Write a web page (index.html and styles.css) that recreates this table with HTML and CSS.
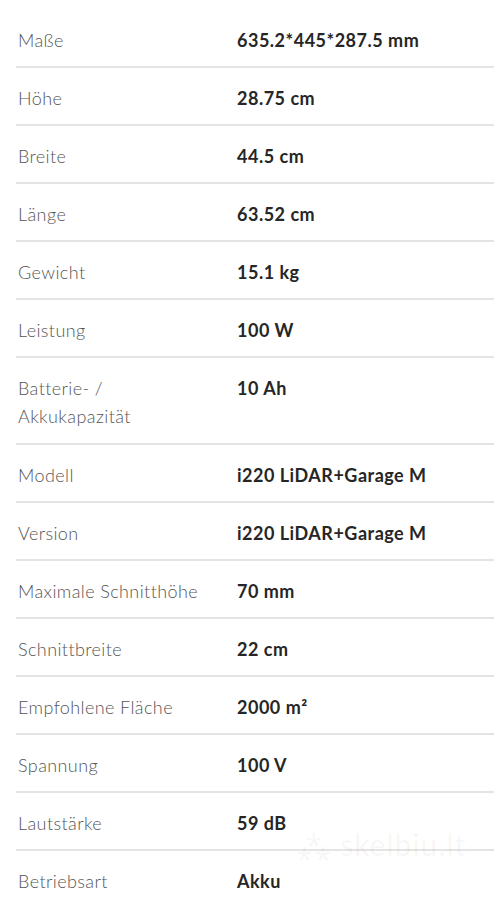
FILE: index.html
```html
<!DOCTYPE html>
<html lang="de">
<head>
<meta charset="UTF-8">
<meta name="viewport" content="width=device-width, initial-scale=1.0">
<title>Technische Daten</title>
<link rel="stylesheet" href="styles.css">
</head>
<body>

<!-- Technische Daten -->
<div class="specs">
  <div class="row"><div class="label">Maße</div><div class="value">635.2*445*287.5 mm</div></div>
  <div class="row"><div class="label">Höhe</div><div class="value">28.75 cm</div></div>
  <div class="row"><div class="label">Breite</div><div class="value">44.5 cm</div></div>
  <div class="row"><div class="label">Länge</div><div class="value">63.52 cm</div></div>
  <div class="row"><div class="label">Gewicht</div><div class="value">15.1 kg</div></div>
  <div class="row"><div class="label">Leistung</div><div class="value">100 W</div></div>
  <div class="row tall"><div class="label">Batterie- /<br>Akkukapazität</div><div class="value">10 Ah</div></div>
  <div class="row"><div class="label">Modell</div><div class="value">i220 LiDAR+Garage M</div></div>
  <div class="row"><div class="label">Version</div><div class="value">i220 LiDAR+Garage M</div></div>
  <div class="row"><div class="label">Maximale Schnitthöhe</div><div class="value">70 mm</div></div>
  <div class="row"><div class="label">Schnittbreite</div><div class="value">22 cm</div></div>
  <div class="row"><div class="label">Empfohlene Fläche</div><div class="value">2000 m²</div></div>
  <div class="row"><div class="label">Spannung</div><div class="value">100 V</div></div>
  <div class="row"><div class="label">Lautstärke</div><div class="value">59 dB</div></div>
  <div class="row"><div class="label">Betriebsart</div><div class="value">Akku</div></div>

  <div class="watermark">⁂ skelbiu.lt</div>
</div>

</body>
</html>
```

FILE: styles.css
```css
body {
  margin: 0;
  background: #fff;
  font-family: 'Lato', 'Noto Sans', sans-serif;
  overflow: hidden;
}

.specs {
  position: relative;
  padding: 10px 0 0 16px;
}

.row {
  display: flex;
  padding: 16px 0 12px;
  border-bottom: 2px solid #e4e4e4;
  line-height: 28px;
}

.row.tall {
  padding-bottom: 13px;
}

.row:last-child {
  border-bottom: none;
}

.label {
  width: 219px;
  padding-left: 2px;
  font-size: 18px;
  font-weight: 300;
  color: #555;
  letter-spacing: 0.4px;
}

.value {
  font-size: 18px;
  font-weight: 700;
  color: #262626;
  letter-spacing: 0.5px;
}

/* Wasserzeichen */
.watermark {
  position: absolute;
  left: 297px;
  top: 824px;
  font-size: 30px;
  color: rgba(0,0,0,0.05);
  letter-spacing: 1px;
}
```
